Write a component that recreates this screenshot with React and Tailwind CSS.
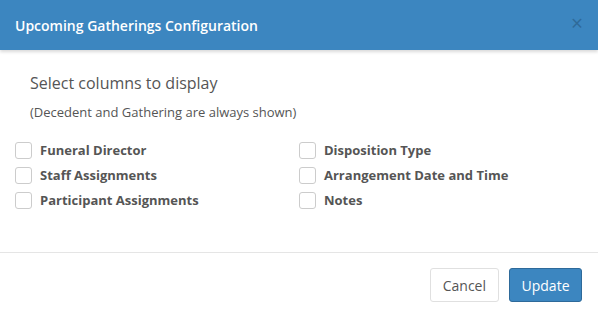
import React, { useState } from 'react';

const columns = [
  ['Funeral Director', 'Disposition Type'],
  ['Staff Assignments', 'Arrangement Date and Time'],
  ['Participant Assignments', 'Notes'],
];

function Check({ label }) {
  const [on, setOn] = useState(false);
  return (
    <label className="flex items-center gap-[8px] h-[25px] cursor-pointer">
      <span
        onClick={() => setOn(!on)}
        className={`w-[17px] h-[17px] rounded-[3px] border border-[#cccccc] bg-white shrink-0 ${on ? 'bg-[#3c85c0]' : ''}`}
      ></span>
      <span className="text-[13px] font-bold text-[#555555]">{label}</span>
    </label>
  );
}

export default function App() {
  return (
    <div className="w-[598px] h-[314px] bg-white font-['Open_Sans',sans-serif] overflow-hidden">
      <div className="h-[50px] bg-[#3c86c0] flex items-center justify-between pl-[15px] pr-[15px] shadow-[0_2px_3px_rgba(0,0,0,0.15)] relative">
        <h1 className="text-[14px] font-semibold text-white">Upcoming Gatherings Configuration</h1>
        <button className="text-[#2f6a99] text-[21px] leading-none pb-[3px]">×</button>
      </div>
      <div className="pt-[20px] px-[30px]">
        <h2 className="text-[16px] text-[#555555] leading-[26px]">Select columns to display</h2>
        <p className="text-[13px] text-[#555555] mt-[7px] leading-[18px]">(Decedent and Gathering are always shown)</p>
      </div>
      <div className="grid grid-cols-2 px-[15px] pt-[17px] pb-[39px] border-b border-[#e5e5e5]">
        {columns.map(([a, b]) => (
          <React.Fragment key={a}>
            <Check label={a} />
            <Check label={b} />
          </React.Fragment>
        ))}
      </div>
      <div className="flex justify-end gap-[10px] pt-[15px] pr-[16px]">
        <button className="h-[34px] px-[12px] rounded-[3px] border border-[#e0e0e0] bg-white text-[14px] text-[#555555]">Cancel</button>
        <button className="h-[34px] px-[11.5px] rounded-[3px] border border-[#2e6a9a] bg-[#3c86c0] text-[14px] text-white">Update</button>
      </div>
    </div>
  );
}
